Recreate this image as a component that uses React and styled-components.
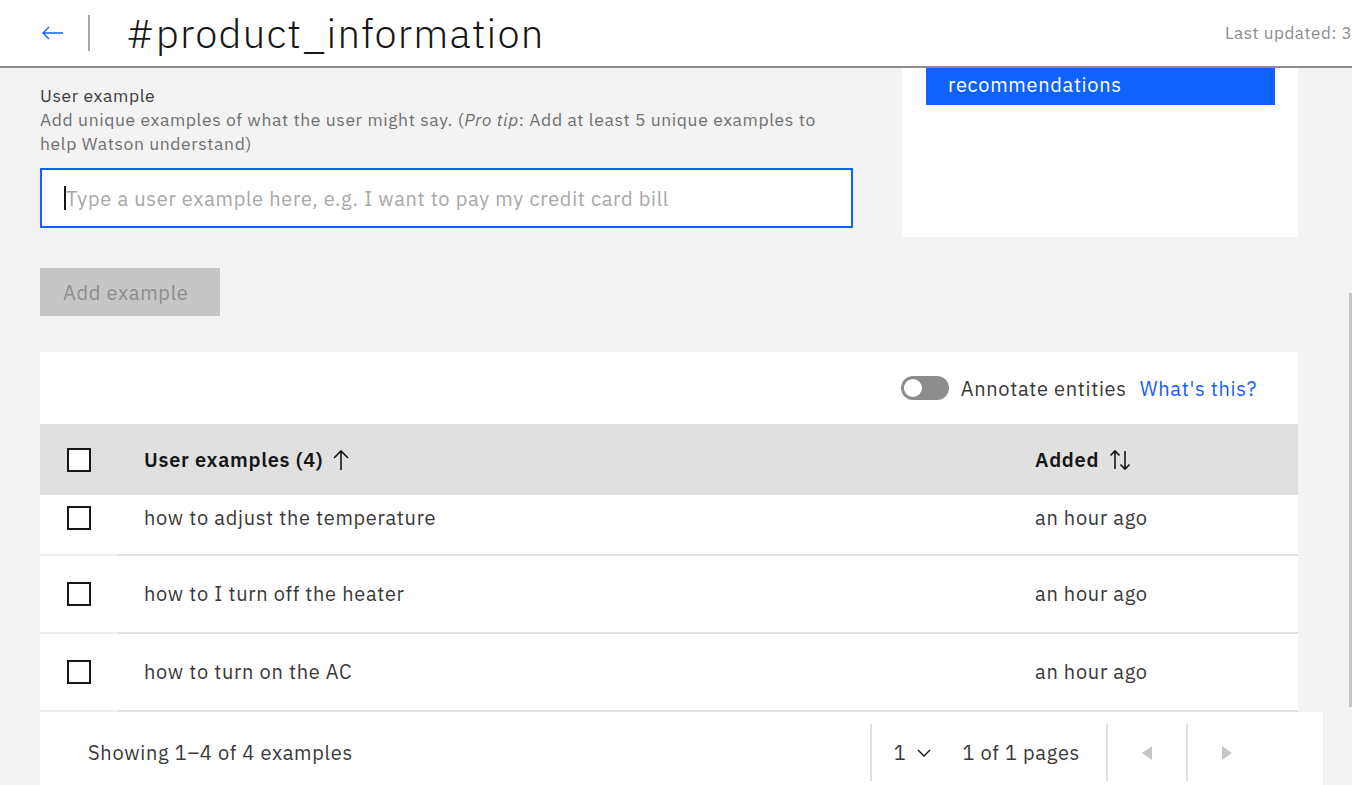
import React from "react";
import styled, { createGlobalStyle } from "styled-components";

const GlobalStyle = createGlobalStyle`
  html, body { margin: 0; padding: 0; }
  body {
    background: #f3f3f3;
    font-family: "IBM Plex Sans", "Noto Sans", "Liberation Sans", sans-serif;
    color: #161616;
    overflow: hidden;
  }
  * { box-sizing: border-box; letter-spacing: 0.035em; }
`;

const Page = styled.div`
  position: relative;
  width: 1352px;
  height: 785px;
  overflow: hidden;
  background: #f3f3f3;
`;

const Header = styled.header`
  display: flex;
  align-items: center;
  height: 68px;
  background: #fff;
  border-bottom: 2px solid #8d8d8d;
  padding-left: 42px;
  overflow: hidden;
`;

const BackButton = styled.button`
  display: flex;
  align-items: center;
  width: 22px;
  height: 24px;
  padding: 0;
  border: none;
  background: none;
  color: #0f62fe;
`;

const Divider = styled.span`
  width: 2px;
  height: 36px;
  margin-left: 24px;
  background: #a8a8a8;
`;

const Title = styled.h1`
  flex: 1;
  margin: 0 0 0 36px;
  font-size: 40px;
  font-weight: 300;
  color: #161616;
  letter-spacing: 0.03em;
  white-space: nowrap;
`;

const Meta = styled.div`
  width: 127px;
  flex-shrink: 0;
  white-space: nowrap;
  overflow: hidden;
  font-size: 17px;
  color: #8d8d8d;
`;

const Main = styled.main`
  display: grid;
  grid-template-columns: 813px 396px;
  column-gap: 49px;
  padding: 0 54px 0 40px;
  align-items: start;
`;

const Form = styled.section`
  padding-top: 16px;
`;

const Label = styled.div`
  font-size: 17.5px;
  line-height: 24px;
  color: #393939;
`;

const Help = styled.div`
  font-size: 17.5px;
  line-height: 24px;
  color: #6f6f6f;
`;

const InputBox = styled.div`
  display: flex;
  align-items: center;
  margin-top: 12px;
  height: 60px;
  background: #fff;
  border: 2px solid #0f62fe;
  padding-left: 22px;
  font-size: 20px;
  color: #a8a8a8;
  white-space: nowrap;
`;

const Caret = styled.span`
  width: 2px;
  height: 24px;
  background: #161616;
`;

const DisabledButton = styled.button`
  display: block;
  margin-top: 40px;
  width: 180px;
  height: 48px;
  border: none;
  background: #c6c6c6;
  color: #8d8d8d;
  font-family: inherit;
  font-size: 20px;
  text-align: left;
  padding: 0 0 0 23px;
`;

const SideCard = styled.aside`
  height: 169px;
  background: #fff;
  padding: 0 23px 0 24px;
`;

const PrimaryButton = styled.div`
  display: flex;
  align-items: center;
  height: 37px;
  padding: 0 0 5px 22px;
  background: #0f62fe;
  color: #fff;
  font-size: 20px;
`;

const TableCard = styled.section`
  grid-column: 1 / -1;
  margin-top: 36px;
  background: #fff;
`;

const Toolbar = styled.div`
  display: flex;
  justify-content: flex-end;
  align-items: center;
  height: 72px;
  padding-right: 41px;
  font-size: 20px;
`;

const Toggle = styled.span`
  position: relative;
  width: 48px;
  height: 24px;
  border-radius: 12px;
  background: #8d8d8d;
  &::after {
    content: "";
    position: absolute;
    left: 3px;
    top: 3px;
    width: 18px;
    height: 18px;
    border-radius: 50%;
    background: #fff;
  }
`;

const ToolbarText = styled.span`
  margin-left: 12px;
  color: #393939;
`;

const Link = styled.a`
  margin-left: 13px;
  color: #0f62fe;
  text-decoration: none;
`;

const Row = styled.div`
  display: grid;
  grid-template-columns: 78px 891px 289px;
  height: ${(p) => (p.$head ? "71px" : p.$clipped ? "61px" : "78px")};
  background: ${(p) => (p.$head ? "#e0e0e0" : "#fff")};
  font-size: 20px;
`;

const Cell = styled.div`
  display: flex;
  align-items: ${(p) => (p.$clipped ? "flex-start" : "center")};
  gap: 10px;
  padding: ${(p) => (p.$clipped ? "11px" : "0")} 0 0 ${(p) => (p.$check ? "27px" : "26px")};
  line-height: 24px;
  white-space: nowrap;
  color: ${(p) => (p.$head ? "#161616" : "#393939")};
  font-weight: ${(p) => (p.$head ? 600 : 400)};
  border-bottom: ${(p) => (p.$head ? "none" : p.$check ? "2px solid #ececec" : "2px solid #e0e0e0")};
`;

const Checkbox = styled.span`
  display: block;
  flex-shrink: 0;
  width: 24px;
  height: 24px;
  border: 2px solid #161616;
  background: #fff;
`;

const Footer = styled.footer`
  display: flex;
  align-items: center;
  width: 1283px;
  height: 80px;
  margin-left: 40px;
  background: #fff;
  font-size: 20px;
  color: #393939;
`;

const Showing = styled.span`
  padding-left: 48px;
`;

const Pager = styled.div`
  display: flex;
  align-items: center;
  align-self: stretch;
  margin-left: auto;
  padding: 12px 57px 11px 0;
`;

const PagerDivider = styled.span`
  align-self: stretch;
  width: 2px;
  background: #e0e0e0;
`;

const PageSelect = styled.span`
  display: flex;
  align-items: center;
  gap: 11px;
  padding-left: 22px;
`;

const PageCount = styled.span`
  padding: 0 26px 0 31px;
`;

const PageButton = styled.span`
  display: flex;
  align-items: center;
  justify-content: center;
  width: 78px;
  color: #c6c6c6;
`;

const Scrollbar = styled.div`
  position: absolute;
  right: 0;
  top: 293px;
  width: 3px;
  height: 414px;
  background: #c6c6c6;
`;

const ArrowLeft = () => (
  <svg width="22" height="14" viewBox="0 0 22 14" fill="none" stroke="currentColor" strokeWidth="1.4">
    <path d="M1 7h20M7 1L1 7l6 6" />
  </svg>
);

const ArrowUp = () => (
  <svg width="16" height="22" viewBox="0 0 16 22" fill="none" stroke="#161616" strokeWidth="1.6">
    <path d="M8 21V2M1 9l7-7 7 7" />
  </svg>
);

const ArrowsUpDown = () => (
  <svg width="22" height="22" viewBox="0 0 22 22" fill="none" stroke="#161616" strokeWidth="1.6">
    <path d="M6 20V2M1.5 6.5L6 2l4.5 4.5M16 2v18M11.5 15.5L16 20l4.5-4.5" />
  </svg>
);

const Chevron = () => (
  <svg width="14" height="8" viewBox="0 0 14 8" fill="none" stroke="#161616" strokeWidth="1.4">
    <path d="M1 1l6 6 6-6" />
  </svg>
);

const Triangle = ({ dir }) => (
  <svg width="10" height="14" viewBox="0 0 10 14" fill="currentColor">
    {dir === "left" ? <path d="M10 0v14L0 7z" /> : <path d="M0 0v14l10-7z" />}
  </svg>
);

const examples = [
  { text: "how to adjust the temperature", added: "an hour ago" },
  { text: "how to I turn off the heater", added: "an hour ago" },
  { text: "how to turn on the AC", added: "an hour ago" },
];

export default function App() {
  return (
    <Page>
      <GlobalStyle />
      <Header>
        <BackButton>
          <ArrowLeft />
        </BackButton>
        <Divider />
        <Title>#product_information</Title>
        <Meta>Last updated: 3 hours ago</Meta>
      </Header>

      <Main>
        <Form>
          <Label>User example</Label>
          <Help>
            Add unique examples of what the user might say. (<i>Pro tip</i>: Add at least 5 unique examples to
            help Watson understand)
          </Help>
          <InputBox>
            <Caret />
            <span>Type a user example here, e.g. I want to pay my credit card bill</span>
          </InputBox>
          <DisabledButton>Add example</DisabledButton>
        </Form>

        <SideCard>
          <PrimaryButton>recommendations</PrimaryButton>
        </SideCard>

        <TableCard>
          <Toolbar>
            <Toggle />
            <ToolbarText>Annotate entities</ToolbarText>
            <Link>What's this?</Link>
          </Toolbar>
          <Row $head>
            <Cell $head $check>
              <Checkbox />
            </Cell>
            <Cell $head>
              User examples (4) <ArrowUp />
            </Cell>
            <Cell $head>
              Added <ArrowsUpDown />
            </Cell>
          </Row>
          {examples.map((ex, i) => (
            <Row key={ex.text} $clipped={i === 0}>
              <Cell $check $clipped={i === 0}>
                <Checkbox />
              </Cell>
              <Cell $clipped={i === 0}>{ex.text}</Cell>
              <Cell $clipped={i === 0}>{ex.added}</Cell>
            </Row>
          ))}
        </TableCard>
      </Main>

      <Footer>
        <Showing>Showing 1–4 of 4 examples</Showing>
        <Pager>
          <PagerDivider />
          <PageSelect>
            1 <Chevron />
          </PageSelect>
          <PageCount>1 of 1 pages</PageCount>
          <PagerDivider />
          <PageButton>
            <Triangle dir="left" />
          </PageButton>
          <PagerDivider />
          <PageButton>
            <Triangle dir="right" />
          </PageButton>
        </Pager>
      </Footer>
      <Scrollbar />
    </Page>
  );
}
